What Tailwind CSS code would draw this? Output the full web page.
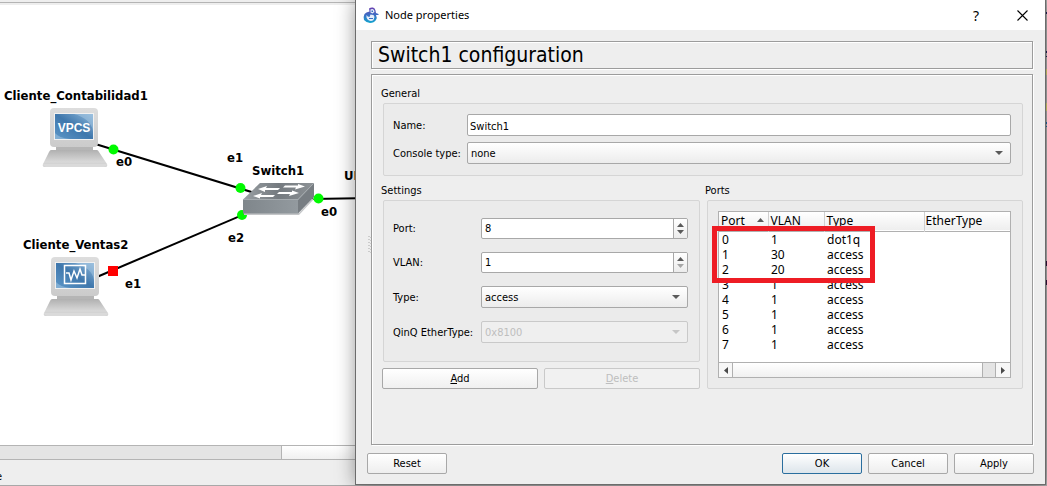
<!DOCTYPE html>
<html lang="en">
<head>
<meta charset="utf-8">
<title>Node properties</title>
<script src="https://cdn.jsdelivr.net/npm/@tailwindcss/browser@4"></script>
</head>
<body class="relative h-screen overflow-hidden bg-[#eeeeee] text-[11px] text-black font-['DejaVu_Sans_Condensed','DejaVu_Sans',sans-serif]">

<!-- Topology workspace -->
<main class="flex h-full flex-col">
  <div class="h-[5px] shrink-0 border-y border-[#b4b4b4] mt-[2px] -mb-[2px]"></div>
  <div class="min-h-0 flex-1 overflow-hidden bg-white">
    <svg class="-mt-[5px] block overflow-visible" width="380" height="330" viewBox="0 0 380 330" role="img" aria-label="Network topology">
      <defs>
        <linearGradient id="screen" x1="0" y1="1" x2="1" y2="0"><stop offset="0" stop-color="#5d97c8"/><stop offset=".5" stop-color="#3f77ac"/><stop offset="1" stop-color="#8db7da"/></linearGradient>
        <linearGradient id="shell" x1="0" y1="0" x2="0" y2="1"><stop offset="0" stop-color="#dddddd"/><stop offset="1" stop-color="#cbcbcb"/></linearGradient>
        <linearGradient id="base" x1="0" y1="0" x2="0" y2="1"><stop offset="0" stop-color="#b0b0b0"/><stop offset=".7" stop-color="#d8d8d8"/><stop offset="1" stop-color="#c8c8c8"/></linearGradient>
        <linearGradient id="top" x1="0" y1="0" x2="1" y2="0"><stop offset="0" stop-color="#9aa0a4"/><stop offset=".5" stop-color="#747a7f"/><stop offset="1" stop-color="#8d9296"/></linearGradient>
        <linearGradient id="front" x1="0" y1="0" x2="1" y2="0"><stop offset="0" stop-color="#7f868b"/><stop offset="1" stop-color="#939a9f"/></linearGradient>
        <g id="pc">
          <path d="M56 146h37v5H56z" fill="#b5b5b5"/>
          <path d="M51 150h46q1 0 2 2l8 12q1 3-2 3H45q-3 0-2-3l6-12q1-2 2-2z" fill="url(#base)"/>
          <path d="M43 164q0 3 3 3h58q3 0 3-3z" fill="#dadada"/>
          <path d="M54 108h40q4 0 4 4v31q0 4-4 4H54q-4 0-4-4v-31q0-4 4-4z" fill="url(#shell)"/>
          <path d="M54 113h40v27H54z" fill="#f1f1f1"/>
          <path d="M55 114h38v25H55z" fill="url(#screen)"/>
          <path d="M74 114h19v17q-2-12-19-17z" fill="#a9c9e4" opacity=".5"/>
          <path d="M55 133q4 5 15 6H55z" fill="#a9c9e4" opacity=".5"/>
        </g>
      </defs>
      <g stroke="#000" stroke-width="2">
        <path d="M97 144.500L258 194"/>
        <path d="M98 276.500L280 199"/>
        <path d="M312 199L372 198"/>
      </g>
      <use href="#pc"/>
      <text x="74" y="132" text-anchor="middle" font-family="Liberation Sans" font-weight="700" font-size="12" fill="#fff">VPCS</text>
      <use href="#pc" x="1" y="149"/>
      <path d="M64.500 265.500h21v18h-21z" fill="none" stroke="#fff" stroke-width="1.500"/>
      <path d="M66 273h3l2 7 3-9 3 7 3-9 2 6h3" fill="none" stroke="#fff" stroke-width="1.500"/>
      <g fill="#00fa00">
        <circle cx="113.500" cy="149.500" r="5"/><circle cx="240.500" cy="188" r="5"/><circle cx="242" cy="215" r="5"/>
      </g>
      <path d="M108 266h10v10h-10z" fill="#f00"/>
      <path d="M244 213h55l15-16v2l-15 16h-55z" fill="#c4c6c8"/>
      <path d="M243 199.500L260 183h54l-16 16.500z" fill="url(#top)"/>
      <path d="M243 199.500h55v14h-55z" fill="url(#front)"/>
      <path d="M298 199.500L314 183v14l-16 16.500z" fill="#777d82"/>
      <path d="M243 199.500h55L314 183" fill="none" stroke="#a5abaf" stroke-width="1"/>
      <g fill="#fff">
        <path d="M258 189l9-3-1 2h14l-2 2h-13v2z"/>
        <path d="M305 186.500l-7-2.500v1.500h-13l-2 2h13l-1 2z"/>
        <path d="M253 196l9-3-1 2h14l-2 2h-13v1.500z"/>
        <path d="M299 193l-7-2.500v1.500h-13l-2 2h13l-1 2z"/>
      </g>
      <circle cx="318.500" cy="198.500" r="5" fill="#00fa00"/>
      <g font-family="DejaVu Sans Condensed, DejaVu Sans, sans-serif" font-weight="700" font-size="13">
        <text x="4" y="100">Cliente_Contabilidad1</text>
        <text x="116" y="166">e0</text>
        <text x="227" y="162">e1</text>
        <text x="252" y="175">Switch1</text>
        <text x="344" y="180">UD</text>
        <text x="321" y="216">e0</text>
        <text x="228" y="242">e2</text>
        <text x="23" y="249">Cliente_Ventas2</text>
        <text x="125" y="288">e1</text>
      </g>
    </svg>
  </div>
  <div class="flex h-[15px] shrink-0 border-y border-[#b4b4b4] bg-[#e4e4e4]">
    <div class="w-[282px] border-r border-[#b4b4b4]"></div>
    <div class="flex-1 bg-linear-to-b from-white to-[#f0f0f0]"></div>
  </div>
  <footer class="flex h-[26px] shrink-0 items-center border-b border-[#a8a8a8] pt-[9px]"><span class="-ml-[4px]">e</span></footer>
</main>

<!-- Part of the window behind, to the right of the dialog -->
<svg class="absolute right-0 top-0" width="2" height="486" viewBox="0 0 2 486" aria-hidden="true">
  <path d="M0 0h2v486H0z" fill="#b0b0b0"/>
  <path d="M0 12h2v2H0zM0 51h2v2H0zM0 56h2v1H0z" fill="#20205a"/>
  <path d="M0 69h2v6H0zM0 103h2v8H0z" fill="#d8d070"/>
  <path d="M0 122h2v2H0zM0 126h2v1H0z" fill="#1c68a8"/>
  <path d="M0 261h2v5H0zM0 280h2v5H0z" fill="#35103c"/>
</svg>

<!-- Dialog -->
<section role="dialog" aria-labelledby="dlg-title" class="absolute bottom-px left-[355px] right-px top-0 flex flex-col border-x border-b border-[#6c6c6c] bg-[#eeeeee] shadow-[0_0_18px_rgba(0,0,0,0.4)]">
  <header class="flex h-[30px] shrink-0 items-center bg-white pl-[7px] font-['Noto_Sans',sans-serif]">
    <svg width="16" height="16" viewBox="0 0 16 16" aria-hidden="true">
      <defs><linearGradient id="logo" x1="0" y1="0" x2="0" y2="1"><stop offset="0" stop-color="#6a3fb0"/><stop offset=".5" stop-color="#3a6fc4"/><stop offset="1" stop-color="#12a5cf"/></linearGradient></defs>
      <path d="M6 1.500Q8 0 10 .5q2 .5 2.500 3L13 6l2.500 1v1H13q1.500 3 0 5-2 3-6 3-4-.5-6-3Q0 10 1.500 7 3 5 6.500 4.500z" fill="url(#logo)"/>
      <path d="M7.500 2.500q2-1 3.500.5l.5 2-2 1.500-2-1zM3.500 8q1 2 3 2l1-2.500 3 .5 1 2-1 3q-2 1.500-4.500.5-2-1-2.500-3z" fill="#e6eefa"/>
      <path d="M8.500 3.500H10V5H8.500zM6 11h4v1H6z" fill="#3a6fc4"/>
    </svg>
    <h1 id="dlg-title" class="ml-[6px] flex-1 text-[11px]">Node properties</h1>
    <button type="button" aria-label="Help" class="h-full w-[46px] text-[14px]">?</button>
    <button type="button" aria-label="Close" class="flex h-full w-[46px] items-center justify-center">
      <svg width="11" height="11" viewBox="0 0 11 11" aria-hidden="true"><path d="M.5.5l10 10M10.500.5l-10 10" stroke="#000" stroke-width="1.100"/></svg>
    </button>
  </header>

  <form class="relative flex min-h-0 flex-1 flex-col pb-[10px] pl-[11px] pr-[11px] pt-[11px] [&_label]:pt-[2px]">
    <svg class="absolute left-[12px] top-[206px]" width="4" height="18" viewBox="0 0 4 18" aria-hidden="true"><path d="M1 0v18M3 1v17" stroke="#a8a8a8" stroke-dasharray="1 2"/></svg>

    <h2 class="ml-[4px] mr-px flex h-[28px] shrink-0 items-center border border-[#9c9c9c] pl-[6px] pt-[2px] text-[21px] shadow-[inset_1px_1px_0_white,1px_1px_0_white]">Switch1 configuration</h2>

    <div class="ml-[4px] mr-px mt-[5px] min-h-0 flex-1 border border-[#9c9c9c] pl-[10px] pr-[9px] pt-[8px] shadow-[inset_1px_1px_0_white,1px_1px_0_white]">
      <fieldset>
        <legend class="-ml-px h-[20px] leading-[22px]">General</legend>
        <div class="ml-px grid grid-cols-[74px_1fr] items-center gap-y-[6px] rounded-xs border border-[#d5d5d5] bg-[#ebebeb] pb-[11px] pl-[9px] pr-[11px] pt-[10px]">
          <label for="name">Name:</label>
          <input id="name" type="text" value="Switch1" class="h-[22px] w-full rounded-xs border border-[#a8a8a8] bg-white px-[2px] pt-[2px]">
          <label for="console" class="whitespace-nowrap">Console type:</label>
          <div class="relative">
            <select id="console" class="block h-[22px] w-full appearance-none rounded-xs border border-[#a8a8a8] bg-linear-to-b from-white to-[#ececec] pl-[3px] pt-[2px]"><option>none</option></select>
            <svg class="pointer-events-none absolute right-[8px] top-[9px]" width="8" height="4" viewBox="0 0 8 4" aria-hidden="true"><path d="M0 0h8L4 4z" fill="#5a5a5a"/></svg>
          </div>
        </div>
      </fieldset>

      <div class="mt-[4px] grid grid-cols-[318px_1fr] gap-[6px]">
        <div>
          <fieldset>
            <legend class="-ml-px h-[20px] leading-[22px]">Settings</legend>
            <div class="ml-px grid h-[162px] grid-cols-[88px_1fr] content-start items-center gap-y-[13px] rounded-xs border border-[#d5d5d5] bg-[#ebebeb] pl-[9px] pr-[11px] pt-[17px]">
              <label for="port">Port:</label>
              <div class="flex h-[21px] overflow-hidden rounded-xs border border-[#a8a8a8] bg-white">
                <input id="port" type="text" inputmode="numeric" value="8" class="min-w-0 flex-1 px-[3px] pt-[2px]">
                <div class="flex w-[14px] flex-col border-l border-[#a8a8a8] bg-linear-to-b from-white to-[#ececec]">
                  <button type="button" aria-label="Increase port" class="flex flex-1 items-end justify-center pb-px"><svg width="7" height="4" viewBox="0 0 7 4"><path d="M0 4h7L3.500 0z" fill="#5a5a5a"/></svg></button>
                  <button type="button" aria-label="Decrease port" class="flex flex-1 items-start justify-center pt-[2px]"><svg width="7" height="4" viewBox="0 0 7 4"><path d="M0 0h7L3.500 4z" fill="#5a5a5a"/></svg></button>
                </div>
              </div>
              <label for="vlan">VLAN:</label>
              <div class="flex h-[21px] overflow-hidden rounded-xs border border-[#a8a8a8] bg-white">
                <input id="vlan" type="text" inputmode="numeric" value="1" class="min-w-0 flex-1 px-[3px] pt-[2px]">
                <div class="flex w-[14px] flex-col border-l border-[#a8a8a8] bg-linear-to-b from-white to-[#ececec]">
                  <button type="button" aria-label="Increase VLAN" class="flex flex-1 items-end justify-center pb-px"><svg width="7" height="4" viewBox="0 0 7 4"><path d="M0 4h7L3.500 0z" fill="#5a5a5a"/></svg></button>
                  <button type="button" aria-label="Decrease VLAN" disabled class="flex flex-1 items-start justify-center pt-[2px]"><svg width="7" height="4" viewBox="0 0 7 4"><path d="M0 0h7L3.500 4z" fill="#a6a6a6"/></svg></button>
                </div>
              </div>
              <label for="type">Type:</label>
              <div class="relative">
                <select id="type" class="block h-[22px] w-full appearance-none rounded-xs border border-[#a8a8a8] bg-linear-to-b from-white to-[#ececec] pl-[3px] pt-[2px]"><option>access</option></select>
                <svg class="pointer-events-none absolute right-[8px] top-[9px]" width="8" height="4" viewBox="0 0 8 4" aria-hidden="true"><path d="M0 0h8L4 4z" fill="#5a5a5a"/></svg>
              </div>
              <label for="qinq" class="whitespace-nowrap">QinQ EtherType:</label>
              <div class="relative">
                <select id="qinq" disabled class="block h-[22px] w-full appearance-none rounded-xs border border-[#c9c9c9] bg-[#efefef] pl-[3px] pt-[2px] text-[#bebebe] opacity-100"><option>0x8100</option></select>
                <svg class="pointer-events-none absolute right-[8px] top-[9px]" width="8" height="4" viewBox="0 0 8 4" aria-hidden="true"><path d="M0 0h8L4 4z" fill="#c6c6c6"/></svg>
              </div>
            </div>
          </fieldset>
          <div class="mt-[6px] grid grid-cols-2 gap-[6px]">
            <button type="button" class="h-[21px] rounded-xs border border-[#a8a8a8] bg-linear-to-b from-white to-[#f0f0f0] pt-[2px]"><u>A</u>dd</button>
            <button type="button" disabled class="h-[21px] rounded-xs border border-[#c9c9c9] bg-[#f1f1f1] pt-[2px] text-[#bebebe]"><u>D</u>elete</button>
          </div>
        </div>

        <fieldset class="min-w-0">
          <legend class="-ml-px h-[20px] leading-[22px]">Ports</legend>
          <div class="ml-px h-[189px] rounded-xs border border-[#d5d5d5] bg-[#ebebeb] pl-[10px] pr-[11px] pt-[10px]">
            <div class="relative flex h-[167px] flex-col border border-[#b0b0b0] bg-white font-['Noto_Sans',sans-serif]">
              <table class="w-full table-fixed border-collapse text-left text-[12px]">
                <colgroup><col class="w-[49px]"><col class="w-[56px]"><col class="w-[100px]"><col></colgroup>
                <thead>
                  <tr class="h-[19px] border-b border-[#b0b0b0] bg-linear-to-b from-white to-[#eeeeee] leading-[18px]">
                    <th class="border-r border-[#d0d0d0] p-0 pl-[2px] font-normal"><span class="flex items-center justify-between pr-[4px]">Port<svg width="7" height="4" viewBox="0 0 7 4" class="-mt-[3px]" aria-hidden="true"><path d="M0 4h7L3.500 0z" fill="#5a5a5a"/></svg></span></th>
                    <th class="border-r border-[#d0d0d0] p-0 pl-[2px] font-normal">VLAN</th>
                    <th class="border-r border-[#d0d0d0] p-0 pl-[2px] font-normal">Type</th>
                    <th class="p-0 pl-px font-normal">EtherType</th>
                  </tr>
                </thead>
                <tbody class="leading-[15px] [&_td]:h-[15px] [&_td]:p-0 [&_td]:pl-[3px]">
                  <tr><td>0</td><td>1</td><td>dot1q</td><td></td></tr>
                  <tr><td>1</td><td>30</td><td>access</td><td></td></tr>
                  <tr><td>2</td><td>20</td><td>access</td><td></td></tr>
                  <tr><td>3</td><td>1</td><td>access</td><td></td></tr>
                  <tr><td>4</td><td>1</td><td>access</td><td></td></tr>
                  <tr><td>5</td><td>1</td><td>access</td><td></td></tr>
                  <tr><td>6</td><td>1</td><td>access</td><td></td></tr>
                  <tr><td>7</td><td>1</td><td>access</td><td></td></tr>
                </tbody>
              </table>
              <div class="mt-auto flex h-[15px] border-t border-[#b0b0b0] bg-[#e4e4e4]">
                <button type="button" aria-label="Scroll left" class="flex w-[14px] items-center justify-center border-r border-[#b0b0b0] bg-[#f7f7f7]"><svg width="4" height="7" viewBox="0 0 4 7"><path d="M4 0v7L0 3.500z" fill="#4a4a4a"/></svg></button>
                <div class="flex-1 border-r border-[#b0b0b0] bg-linear-to-b from-white to-[#f0f0f0]"></div>
                <div class="w-[13px] border-r border-[#b0b0b0]"></div>
                <button type="button" aria-label="Scroll right" class="flex w-[14px] items-center justify-center bg-[#f7f7f7]"><svg width="4" height="7" viewBox="0 0 4 7"><path d="M0 0v7l4-3.500z" fill="#4a4a4a"/></svg></button>
              </div>
              <div class="pointer-events-none absolute -left-[7px] top-[14px] h-[57px] w-[163px] border-5 border-[#ee1c24]"></div>
            </div>
          </div>
        </fieldset>
      </div>
    </div>

    <div class="mt-[8px] flex shrink-0 gap-[6px]">
      <button type="reset" class="mr-auto h-[21px] w-[80px] rounded-xs border border-[#a8a8a8] bg-linear-to-b from-white to-[#eeeeee] pt-px">Reset</button>
      <button type="submit" class="h-[21px] w-[80px] rounded-xs border border-[#2a6e9e] bg-linear-to-b from-white to-[#dde5eb] pt-px">OK</button>
      <button type="button" class="h-[21px] w-[80px] rounded-xs border border-[#a8a8a8] bg-linear-to-b from-white to-[#eeeeee] pt-px">Cancel</button>
      <button type="button" class="h-[21px] w-[80px] rounded-xs border border-[#a8a8a8] bg-linear-to-b from-white to-[#eeeeee] pt-px">Apply</button>
    </div>
  </form>
</section>
</body>
</html>
